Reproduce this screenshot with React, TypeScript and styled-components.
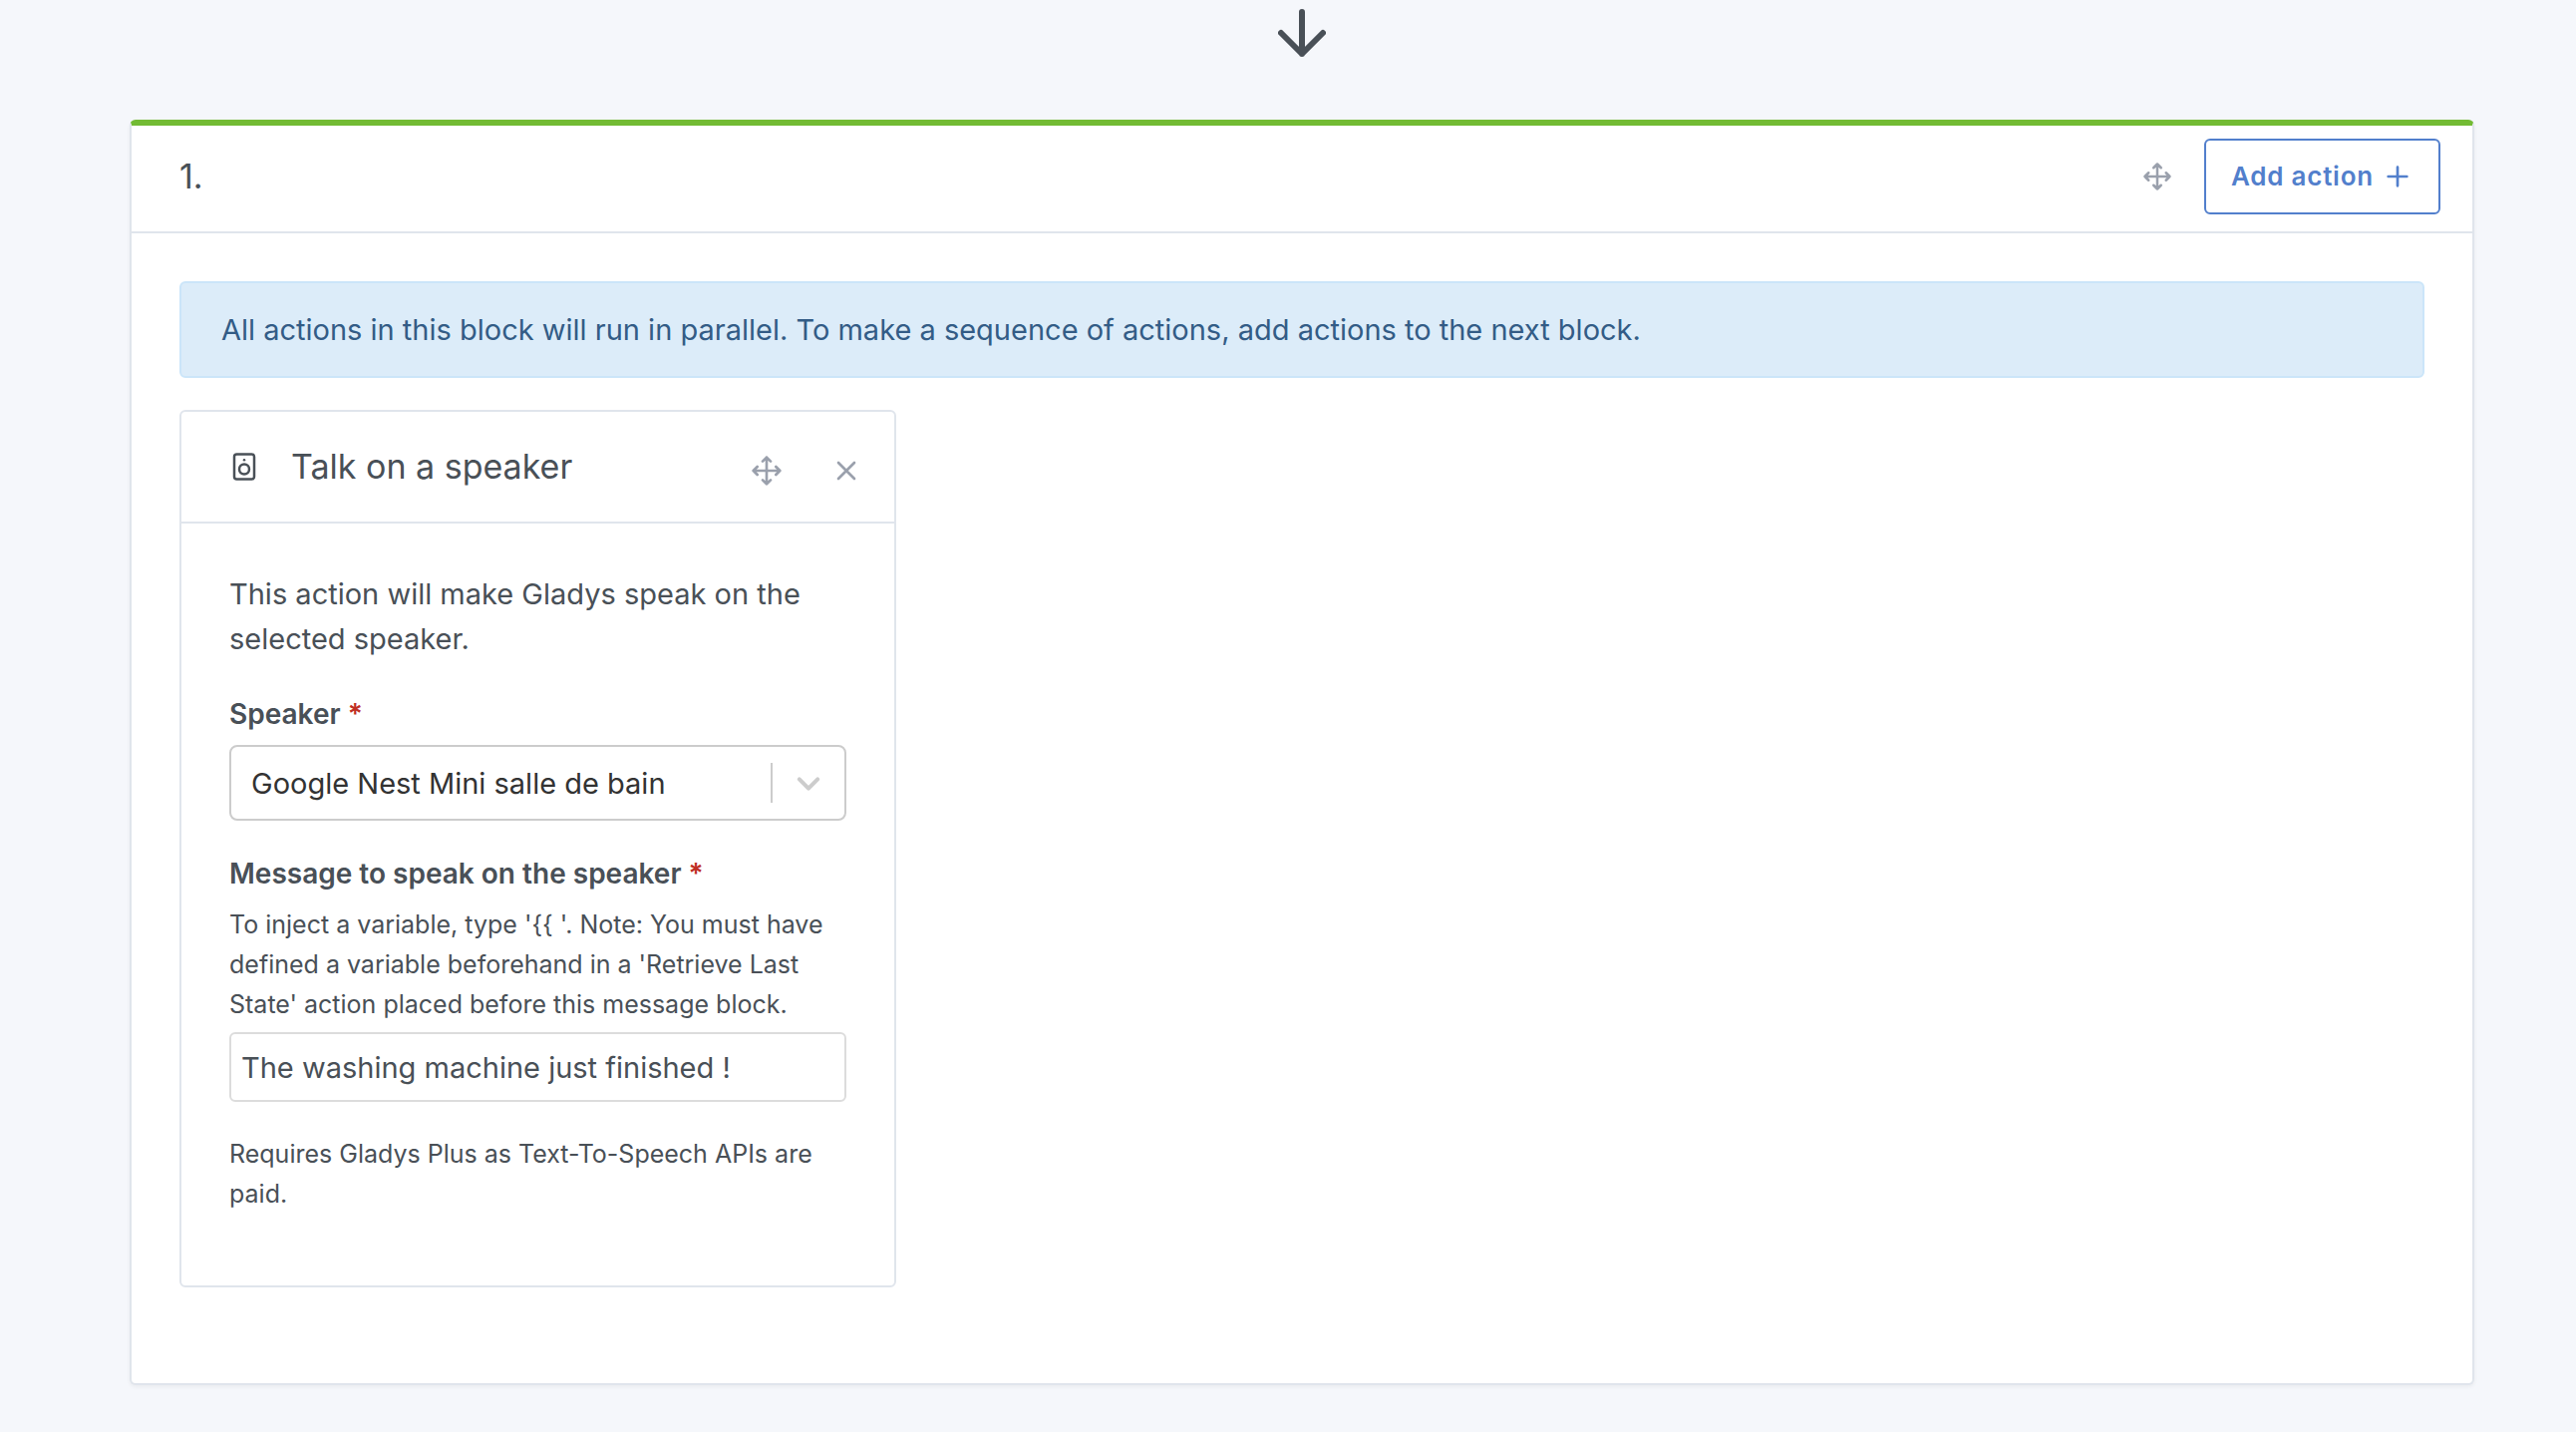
import React, { useState } from "react";
import styled, { createGlobalStyle } from "styled-components";

const GlobalStyle = createGlobalStyle`
  *, *::before, *::after { box-sizing: border-box; }
  body {
    margin: 0;
    background: #f5f7fb;
    color: #495057;
    font-family: Inter, "Liberation Sans", sans-serif;
    font-size: 29px;
    line-height: 45px;
  }
  p, h2, h3 { margin: 0; }
`;

const Page = styled.main`
  padding: 9px 102px 47px 130px;
`;

const FlowArrow = styled.div`
  display: flex;
  justify-content: center;
  margin-bottom: 63px;
`;

const Icon = styled.svg`
  display: block;
  flex: none;
  fill: none;
  stroke: currentColor;
  stroke-width: 2;
  stroke-linecap: round;
  stroke-linejoin: round;
`;

const Block = styled.section`
  background: #fff;
  border: 2px solid #e0e5ec;
  border-top: 6px solid #73bb34;
  border-radius: 6px;
  box-shadow: 0 2px 4px rgba(0, 0, 0, 0.05);
`;

const BlockHeader = styled.header`
  display: flex;
  align-items: center;
  padding: 13px 32px 17px 48px;
  border-bottom: 2px solid #e0e5ec;
`;

const Title = styled.h2`
  flex: 1;
  font-size: 34px;
  font-weight: 400;
  line-height: 44px;
`;

const IconButton = styled.button`
  display: flex;
  padding: 0;
  border: 0;
  background: none;
  color: #9aa0ac;
  cursor: pointer;
`;

const BlockTools = styled.div`
  display: flex;
  align-items: center;
  gap: 32px;
`;

const AddButton = styled.button`
  display: flex;
  align-items: center;
  gap: 8px;
  height: 76px;
  padding: 0 25px;
  border: 2px solid #527fcc;
  border-radius: 6px;
  background: none;
  color: #527fcc;
  font: 600 26px/40px Inter, "Liberation Sans", sans-serif;
  letter-spacing: 0.03em;
  cursor: pointer;
`;

const BlockBody = styled.div`
  padding: 48px;
`;

const Notice = styled.div`
  margin-bottom: 32px;
  padding: 24px 40px;
  border: 2px solid #cbe5f9;
  border-radius: 6px;
  background: #dcecf9;
  color: #335c86;
`;

const ActionGrid = styled.div`
  display: grid;
  grid-template-columns: repeat(3, minmax(0, 1fr));
  gap: 48px;
  margin-bottom: 48px;
`;

const Action = styled.article`
  border: 2px solid #e0e5ec;
  border-radius: 6px;
`;

const ActionHeader = styled.header`
  display: flex;
  align-items: center;
  height: 112px;
  padding: 0 32px 0 48px;
  border-bottom: 2px solid #e0e5ec;
`;

const ActionTitle = styled(Title)`
  margin-left: 32px;
`;

const ActionTools = styled.div`
  display: flex;
  align-items: center;
  gap: 48px;
  padding-top: 8px;
`;

const ActionBody = styled.div`
  padding: 48px 48px 72px;
`;

const Field = styled.div`
  margin-top: 32px;
`;

const Label = styled.label`
  display: block;
  margin-bottom: 10px;
  font-size: 28px;
  font-weight: 600;
  line-height: 42px;
`;

const Required = styled.span`
  color: #bf2f25;
`;

const SelectBox = styled.div`
  display: grid;
`;

const Select = styled.select`
  grid-area: 1 / 1;
  width: 100%;
  height: 76px;
  padding: 0 80px 0 20px;
  border: 2px solid #ccc;
  border-radius: 8px;
  background: #fff;
  color: #333;
  font: inherit;
  appearance: none;
`;

const Indicator = styled.span`
  grid-area: 1 / 1;
  display: flex;
  align-items: center;
  justify-self: end;
  align-self: center;
  height: 40px;
  margin-right: 18px;
  padding-left: 16px;
  border-left: 2px solid #ccc;
  color: #ccc;
  pointer-events: none;
`;

const Hint = styled.p`
  font-size: 25px;
  line-height: 40px;
`;

const Input = styled.input`
  display: block;
  width: 100%;
  height: 70px;
  margin-top: 8px;
  padding: 0 10px;
  border: 2px solid #dcdcdc;
  border-radius: 6px;
  background: #fff;
  color: inherit;
  font: inherit;
`;

const MoveIcon = ({ size }: { size: number }) => (
  <Icon width={size} height={size} viewBox="0 0 24 24" aria-hidden="true">
    <path d="M5 9l-3 3 3 3M9 5l3-3 3 3M15 19l-3 3-3-3M19 9l3 3-3 3M2 12h20M12 2v20" />
  </Icon>
);

export default function App() {
  const [message, setMessage] = useState("The washing machine just finished !");

  return (
    <>
      <GlobalStyle />
      <Page>
        <FlowArrow>
          <Icon width="48" height="48" viewBox="4 4 16 16" aria-hidden="true">
            <path d="M12 5v14M19 12l-7 7-7-7" />
          </Icon>
        </FlowArrow>
        <Block>
          <BlockHeader>
            <Title>1.</Title>
            <BlockTools>
              <IconButton type="button" aria-label="Move block">
                <MoveIcon size={30} />
              </IconButton>
              <AddButton type="button">
                Add action
                <Icon width="32" height="32" viewBox="0 0 24 24" aria-hidden="true">
                  <path d="M12 5v14M5 12h14" />
                </Icon>
              </AddButton>
            </BlockTools>
          </BlockHeader>
          <BlockBody>
            <Notice>
              All actions in this block will run in parallel. To make a sequence of actions, add
              actions to the next block.
            </Notice>
            <ActionGrid>
              <Action>
                <ActionHeader>
                  <Icon width="30" height="30" viewBox="0 0 24 24" aria-hidden="true">
                    <rect x="4" y="2" width="16" height="20" rx="2" />
                    <circle cx="12" cy="14" r="4" />
                    <path d="M12 6.5h.01" />
                  </Icon>
                  <ActionTitle as="h3">Talk on a speaker</ActionTitle>
                  <ActionTools>
                    <IconButton type="button" aria-label="Move action">
                      <MoveIcon size={32} />
                    </IconButton>
                    <IconButton type="button" aria-label="Remove action">
                      <Icon width="32" height="32" viewBox="0 0 24 24" aria-hidden="true">
                        <path d="M18 6L6 18M6 6l12 12" />
                      </Icon>
                    </IconButton>
                  </ActionTools>
                </ActionHeader>
                <ActionBody>
                  <p>This action will make Gladys speak on the selected speaker.</p>
                  <Field>
                    <Label htmlFor="speaker">
                      Speaker <Required>*</Required>
                    </Label>
                    <SelectBox>
                      <Select id="speaker">
                        <option>Google Nest Mini salle de bain</option>
                      </Select>
                      <Indicator>
                        <Icon width="40" height="40" viewBox="0 0 20 20" aria-hidden="true">
                          <path d="M5.4 8.2l4.6 4.6 4.6-4.6" />
                        </Icon>
                      </Indicator>
                    </SelectBox>
                  </Field>
                  <Field>
                    <Label htmlFor="message">
                      Message to speak on the speaker <Required>*</Required>
                    </Label>
                    <Hint>
                      {"To inject a variable, type '{{ '. Note: You must have defined a variable beforehand in a 'Retrieve Last State' action placed before this message block."}
                    </Hint>
                    <Input
                      id="message"
                      type="text"
                      value={message}
                      onChange={(event) => setMessage(event.target.value)}
                    />
                  </Field>
                  <Field>
                    <Hint>Requires Gladys Plus as Text-To-Speech APIs are paid.</Hint>
                  </Field>
                </ActionBody>
              </Action>
            </ActionGrid>
          </BlockBody>
        </Block>
      </Page>
    </>
  );
}
